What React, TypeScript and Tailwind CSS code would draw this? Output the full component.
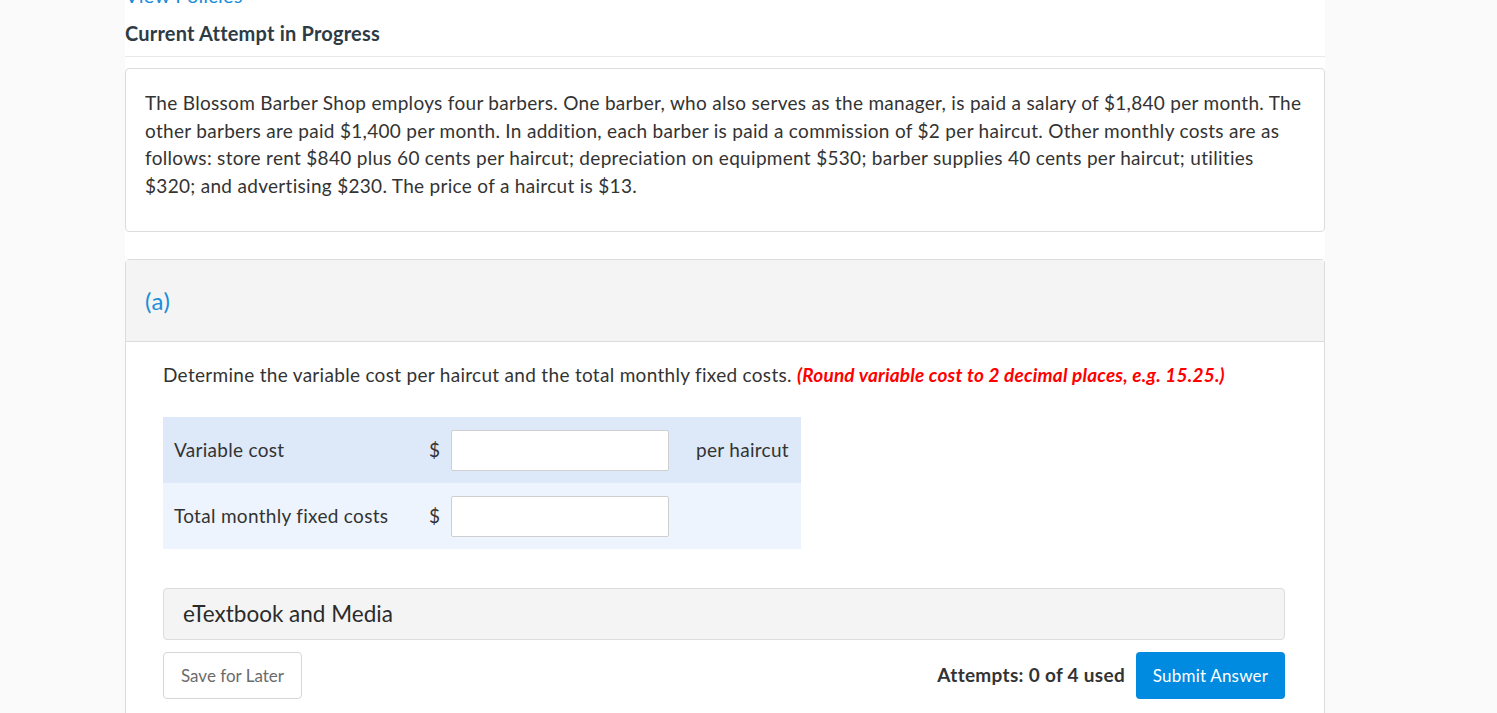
import React from "react";

export default function App() {
  return (
    <div className="min-h-[713px] w-full bg-[#fafafa] text-[#333]" style={{ fontFamily: "Lato, 'Noto Sans', sans-serif" }}>
      <div className="ml-[125px] w-[1200px] bg-white min-h-[713px] overflow-hidden">
        <div className="relative h-[57px] border-b border-[#e8e8e8]">
          <a className="absolute left-0 top-[-17px] text-[20px] tracking-[0.2px] text-[#1a8ed8] leading-[24px]">View Policies</a>
          <h2 className="absolute left-0 top-[20px] text-[20px] font-bold tracking-[0.2px] leading-[26px] text-[#2d3b45]">Current Attempt in Progress</h2>
        </div>
        <div className="mt-[11px] rounded-[4px] border border-[#dcdcdc] px-[19px] pt-[20px] pb-[32px]">
          <p className="text-[19px] tracking-[0.3px] leading-[27.5px] text-[#333]">
            The Blossom Barber Shop employs four barbers. One barber, who also serves as the manager, is paid a salary of $1,840 per month. The other barbers are paid $1,400 per month. In addition, each barber is paid a commission of $2 per haircut. Other monthly costs are as follows: store rent $840 plus 60 cents per haircut; depreciation on equipment $530; barber supplies 40 cents per haircut; utilities $320; and advertising $230. The price of a haircut is $13.
          </p>
        </div>
        <div className="mt-[27px] rounded-[4px] border border-[#dcdcdc]">
          <div className="h-[82px] bg-[#f4f4f4] border-b border-[#dcdcdc] flex items-center pl-[19px]">
            <span className="text-[24px] tracking-[0.5px] text-[#1a8ed8]">(a)</span>
          </div>
          <div className="pl-[37px] pr-[39px] pt-[20px] pb-[30px]">
            <p className="text-[19px] tracking-[0.3px] leading-[26px]">
              Determine the variable cost per haircut and the total monthly fixed costs.{" "}
              <span className="font-bold italic text-[#ff0000] tracking-[0.2px]">(Round variable cost to 2 decimal places, e.g. 15.25.)</span>
            </p>
            <div className="mt-[29px] w-[638px]">
              <div className="flex h-[66px] items-center bg-[#dde8f8]">
                <div className="w-[266px] pl-[11px] text-[19px] tracking-[0.3px]">Variable cost</div>
                <div className="w-[22px] text-[19px]">$</div>
                <div className="h-[41px] w-[218px] rounded-[2px] border border-[#cfcfcf] bg-white" />
                <div className="pl-[27px] text-[19px] tracking-[0.3px]">per haircut</div>
              </div>
              <div className="flex h-[66px] items-center bg-[#edf4fd]">
                <div className="w-[266px] pl-[11px] text-[19px] tracking-[0.3px]">Total monthly fixed costs</div>
                <div className="w-[22px] text-[19px]">$</div>
                <div className="h-[41px] w-[218px] rounded-[2px] border border-[#cfcfcf] bg-white" />
              </div>
            </div>
            <div className="mt-[39px] flex h-[52px] items-center rounded-[4px] border border-[#dcdcdc] bg-[#f4f4f4] pl-[19px]">
              <span className="text-[22.5px] text-[#2b2b2b]">eTextbook and Media</span>
            </div>
            <div className="mt-[12px] flex items-center justify-between">
              <button className="h-[47px] w-[139px] rounded-[4px] border border-[#d6d6d6] bg-white text-[17px] text-[#6b6b6b]">Save for Later</button>
              <div className="flex items-center">
                <span className="mr-[11px] text-[19px] tracking-[0.3px] font-bold text-[#333]">Attempts: 0 of 4 used</span>
                <button className="h-[47px] w-[149px] rounded-[4px] bg-[#008be0] text-[17px] tracking-[0.2px] text-white">Submit Answer</button>
              </div>
            </div>
          </div>
        </div>
      </div>
    </div>
  );
}
